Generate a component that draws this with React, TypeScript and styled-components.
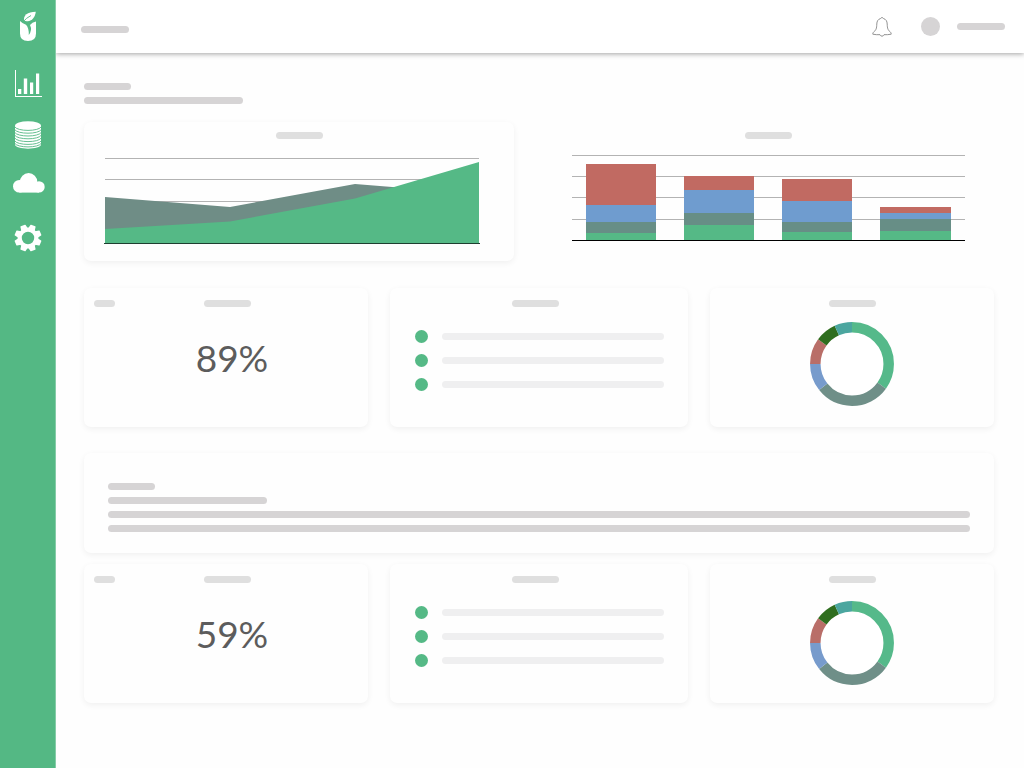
import React from "react";
import styled, { createGlobalStyle } from "styled-components";

const color = {
  green: "#55b986",
  sidebar: "#54b884",
  slate: "#6f8d86",
  slateBar: "#678e86",
  blue: "#6f9ccf",
  red: "#c16a62",
  grid: "#b3b3b3",
  bar: "#d6d4d5",
  barSoft: "#dfdfdf",
  barFaint: "#efeff0",
  text: "#5c5c5c",
};

const GlobalStyle = createGlobalStyle`
  * { box-sizing: border-box; }
  body {
    margin: 0;
    background: #fefefe;
    color: ${color.text};
    font-family: Lato, "Liberation Sans", sans-serif;
  }
`;

const Shell = styled.div`
  display: flex;
  min-height: 100vh;
`;

const Sidebar = styled.nav`
  position: relative;
  z-index: 1;
  flex: none;
  width: 56px;
  padding-top: 11px;
  display: flex;
  flex-direction: column;
  align-items: center;
  background: ${color.sidebar};
  box-shadow: inset -1px 0 #86cca8;
`;

const Logo = styled.a`
  display: block;
  height: 32px;
  margin-bottom: 24px;
`;

const NavList = styled.ul`
  margin: 0;
  padding: 0;
  list-style: none;
  display: flex;
  flex-direction: column;
  gap: 17px;
`;

const NavLink = styled.a`
  display: flex;
  align-items: center;
  justify-content: center;
  width: 40px;
  height: 34px;

  svg { display: block; fill: #fff; }
`;

const Page = styled.div`
  flex: 1;
  min-width: 0;
`;

const Header = styled.header`
  display: flex;
  align-items: center;
  justify-content: space-between;
  height: 53px;
  padding: 0 19px 0 25px;
  background: #fff;
  box-shadow: 0 1px 5px rgba(0, 0, 0, 0.36);
`;

const HeaderTitle = styled.div`
  padding-top: 6px;
`;

const UserArea = styled.div`
  display: flex;
  align-items: center;
`;

const BellButton = styled.button`
  display: flex;
  padding: 0;
  border: 0;
  background: none;
`;

const Avatar = styled.span`
  width: 19px;
  height: 19px;
  margin: 0 17px 0 29px;
  border-radius: 50%;
  background: ${color.bar};
`;

const Bar = styled.span<{ $width?: number; $tone?: string }>`
  display: block;
  width: ${(p) => (p.$width ? `${p.$width}px` : "100%")};
  height: 7px;
  border-radius: 4px;
  background: ${(p) => p.$tone ?? color.bar};
`;

const BarStack = styled.div`
  display: flex;
  flex-direction: column;
  gap: 7px;
`;

const Main = styled.main`
  padding: 30px 30px 64px 28px;
`;

const ChartRow = styled.div`
  display: grid;
  grid-template-columns: 430fr 451fr;
  gap: 29px;
  margin: 18px 0 27px;
`;

const CardRow = styled.div`
  display: grid;
  grid-template-columns: 284fr 298fr 284fr;
  gap: 22px;
`;

const Panel = styled.section`
  min-height: 139px;
  padding-top: 10px;
`;

const Card = styled(Panel)`
  padding-top: 12px;
  border-radius: 7px;
  background: #fefefe;
  box-shadow: 0 2px 6px rgba(0, 0, 0, 0.06);
`;

const ChartCard = styled(Card)`
  padding-top: 10px;
`;

const PanelTitle = styled.div`
  display: flex;
  justify-content: center;
`;

const AreaFrame = styled.div`
  padding: 17px 34px 0 20px;

  svg { display: block; width: 100%; height: 88px; }
`;

const StackFrame = styled.div`
  padding: 14px 29px 0;

  svg { display: block; width: 100%; height: 88px; }
`;

const StatTitle = styled.div`
  display: grid;
  grid-template-columns: 1fr auto 1fr;
  padding: 0 7px 0 10px;
`;

const StatValue = styled.p`
  margin: 27px 0 0;
  padding-left: 12px;
  font-size: 37px;
  line-height: 48px;
  text-align: center;
`;

const ListTitle = styled(PanelTitle)`
  padding-right: 7px;
`;

const List = styled.ul`
  margin: 22px 24px 0 25px;
  padding: 0;
  list-style: none;
  display: flex;
  flex-direction: column;
  gap: 10px;
`;

const ListItem = styled.li`
  display: flex;
  align-items: center;
  gap: 14px;
  height: 14px;
`;

const Dot = styled.span`
  flex: none;
  width: 13px;
  height: 13px;
  border-radius: 50%;
  background: ${color.green};
`;

const DonutFrame = styled.div<{ $gap: number }>`
  display: flex;
  justify-content: center;
  padding-top: ${(p) => p.$gap}px;
`;

const TextCard = styled(Card)`
  min-height: 100px;
  margin: 26px 0 11px;
  padding: 30px 24px 21px;
`;

function LogoMark() {
  return (
    <svg width="20" height="32" viewBox="0 0 20 32" fill="#fff">
      <path d="M17.800 0.700C17 6 14.500 9.800 9.500 10.200Q7.500 10.300 6.200 9.800C4.800 4.500 9.500 0.700 17.800 0.700Z" />
      <path d="M5 11Q8 7 13 4.500" fill="none" stroke={color.sidebar} strokeWidth="0.900" />
      <path d="M2 10Q5 13 8 13.800Q11 17 10.800 24Q14.500 19 12 14Q14 11 18 10.500V22.500Q18 30 10 30Q2 30 2 22.500Z" />
    </svg>
  );
}

function ChartIcon() {
  return (
    <svg width="28" height="28" viewBox="0 0 28 28">
      <path d="M1 0H2V26H28V27H1ZM4 19H7.300V24H4ZM9.800 8.500H13.200V24H9.800ZM16 12.500H19.200V24H16ZM22 3.500H25.200V24H22Z" />
    </svg>
  );
}

function DatabaseIcon() {
  return (
    <svg width="28" height="28" viewBox="0 0 28 28">
      <path d="M1 5V23.500C1 29 27 29 27 23.500V5Z" />
      <ellipse cx="14" cy="4.800" rx="13" ry="4.500" />
      {[5.5, 8.3, 11.1, 13.9, 16.7, 19.5, 22].map((y) => (
        <path
          key={y}
          d={`M0.500 ${y}C3 ${y + 5.2} 25 ${y + 5.2} 27.500 ${y}`}
          style={{ fill: "none" }}
          stroke={color.sidebar}
          strokeWidth="0.900"
        />
      ))}
    </svg>
  );
}

function CloudIcon() {
  return (
    <svg width="34" height="28" viewBox="-2 -1 34 28">
      <circle cx="6.300" cy="13.300" r="6.300" />
      <circle cx="15.600" cy="8.800" r="8.700" />
      <circle cx="26" cy="13.900" r="5.700" />
      <path d="M6.300 10H26V19.600H6.300Z" />
    </svg>
  );
}

function GearIcon() {
  return (
    <svg width="28" height="28" viewBox="-14 -15 28 28" overflow="visible">
      <circle r="8.300" style={{ fill: "none" }} stroke="#fff" strokeWidth="4.200" />
      {[22.5, 67.5, 112.5, 157.5, 202.5, 247.5, 292.5, 337.5].map((angle) => (
        <path
          key={angle}
          transform={`rotate(${angle})`}
          d="M-3.500 -9L-2.800 -13Q-2.700 -13.500 -2.200 -13.500H2.200Q2.700 -13.500 2.800 -13L3.500 -9Z"
        />
      ))}
    </svg>
  );
}

function BellIcon() {
  return (
    <svg width="20" height="20" viewBox="0 0 20 20" fill="none" stroke="#777" strokeWidth="0.800">
      <path d="M8.400 1.600Q9 0.600 10 0.600T11.600 1.600C14 2.300 15.100 4.200 15.200 7C15.300 11.500 16 13 17.800 14.500C18.800 15.400 19.300 16.200 19.200 17.200Q15.500 17.900 12 17.700Q11.300 19.200 10 19.200T8 17.700Q4.500 17.900 0.800 17.200C0.700 16.200 1.200 15.400 2.200 14.500C4 13 4.700 11.500 4.800 7C4.900 4.200 6 2.300 8.400 1.600Z" />
    </svg>
  );
}

function AreaChart() {
  return (
    <svg viewBox="0 0 376 88" preserveAspectRatio="none" role="img" aria-label="Area chart">
      <g fill={color.grid}>
        <rect x="1" y="2" width="374" height="1" />
        <rect x="1" y="23" width="374" height="1" />
        <rect x="1" y="45" width="374" height="1" />
        <rect x="1" y="66" width="374" height="1" />
      </g>
      <path d="M1 41L126 51L251 28L375 38V87H1Z" fill={color.slate} />
      <path d="M1 73L126 65.500L251 42.500L375 6V87H1Z" fill={color.green} />
      <rect y="87" width="376" height="1" fill="#1e3f30" />
    </svg>
  );
}

const stacks = [
  { x: 14, width: 70, tops: [11, 52, 69, 80] },
  { x: 112, width: 70, tops: [23, 37, 60, 72] },
  { x: 210, width: 70, tops: [26, 48, 69, 79] },
  { x: 308, width: 71, tops: [54, 60, 66, 78] },
];
const stackColors = [color.red, color.blue, color.slateBar, color.green];

function StackedChart() {
  return (
    <svg viewBox="0 0 393 88" preserveAspectRatio="none" role="img" aria-label="Stacked bar chart">
      {[2, 23, 44, 66].map((y) => (
        <rect key={y} y={y} width="393" height="1" fill={color.grid} />
      ))}
      {stacks.map((stack) =>
        stack.tops.map((top, i) => (
          <rect
            key={`${stack.x}-${i}`}
            x={stack.x}
            y={top}
            width={stack.width}
            height={(stack.tops[i + 1] ?? 87) - top}
            fill={stackColors[i]}
          />
        ))
      )}
      <rect y="87" width="393" height="1" fill="#000" />
    </svg>
  );
}

const slices = [
  { start: 0, size: 35, fill: "#55b98a" },
  { start: 35, size: 29.3, fill: "#6f8f88" },
  { start: 64.3, size: 10.7, fill: "#779bcc" },
  { start: 75, size: 10, fill: "#b96e68" },
  { start: 85, size: 8.2, fill: "#2f6e1f" },
  { start: 93.2, size: 6.8, fill: "#4ba69f" },
];

function Donut() {
  return (
    <svg width="84" height="84" viewBox="-42 -42 84 84" role="img" aria-label="Donut chart">
      <circle r="32" fill="#fff" />
      <g transform="rotate(-90)" fill="none" strokeWidth="10.500">
        {slices.map((s) => (
          <circle
            key={s.start}
            r="36.700"
            stroke={s.fill}
            pathLength="100"
            strokeDasharray={`${s.size} ${100 - s.size}`}
            strokeDashoffset={-s.start}
          />
        ))}
      </g>
    </svg>
  );
}

function SummaryRow({ value, donutGap }: { value: string; donutGap: number }) {
  return (
    <CardRow>
      <Card>
        <StatTitle>
          <Bar $width={21} $tone={color.barSoft} />
          <Bar $width={47} $tone={color.barSoft} />
        </StatTitle>
        <StatValue>{value}</StatValue>
      </Card>
      <Card>
        <ListTitle>
          <Bar $width={47} $tone={color.barSoft} />
        </ListTitle>
        <List>
          {[0, 1, 2].map((i) => (
            <ListItem key={i}>
              <Dot />
              <Bar $tone={color.barFaint} />
            </ListItem>
          ))}
        </List>
      </Card>
      <Card>
        <PanelTitle>
          <Bar $width={47} $tone={color.barSoft} />
        </PanelTitle>
        <DonutFrame $gap={donutGap}>
          <Donut />
        </DonutFrame>
      </Card>
    </CardRow>
  );
}

const navItems = [
  { label: "Reports", icon: <ChartIcon /> },
  { label: "Data", icon: <DatabaseIcon /> },
  { label: "Cloud", icon: <CloudIcon /> },
  { label: "Settings", icon: <GearIcon /> },
];

export default function App() {
  return (
    <>
      <GlobalStyle />
      <Shell>
        <Sidebar aria-label="Main">
          <Logo href="#" aria-label="Home">
            <LogoMark />
          </Logo>
          <NavList>
            {navItems.map((item) => (
              <li key={item.label}>
                <NavLink href="#" aria-label={item.label}>
                  {item.icon}
                </NavLink>
              </li>
            ))}
          </NavList>
        </Sidebar>
        <Page>
          <Header>
            <HeaderTitle>
              <Bar $width={48} />
            </HeaderTitle>
            <UserArea>
              <BellButton type="button" aria-label="Notifications">
                <BellIcon />
              </BellButton>
              <Avatar />
              <Bar $width={48} />
            </UserArea>
          </Header>
          <Main>
            <BarStack>
              <Bar $width={47} />
              <Bar $width={159} />
            </BarStack>
            <ChartRow>
              <ChartCard>
                <PanelTitle>
                  <Bar $width={47} $tone={color.barSoft} />
                </PanelTitle>
                <AreaFrame>
                  <AreaChart />
                </AreaFrame>
              </ChartCard>
              <Panel>
                <PanelTitle>
                  <Bar $width={47} $tone={color.barSoft} />
                </PanelTitle>
                <StackFrame>
                  <StackedChart />
                </StackFrame>
              </Panel>
            </ChartRow>
            <SummaryRow value="89%" donutGap={15} />
            <TextCard>
              <BarStack>
                <Bar $width={47} />
                <Bar $width={159} />
                <Bar />
                <Bar />
              </BarStack>
            </TextCard>
            <SummaryRow value="59%" donutGap={18} />
          </Main>
        </Page>
      </Shell>
    </>
  );
}
